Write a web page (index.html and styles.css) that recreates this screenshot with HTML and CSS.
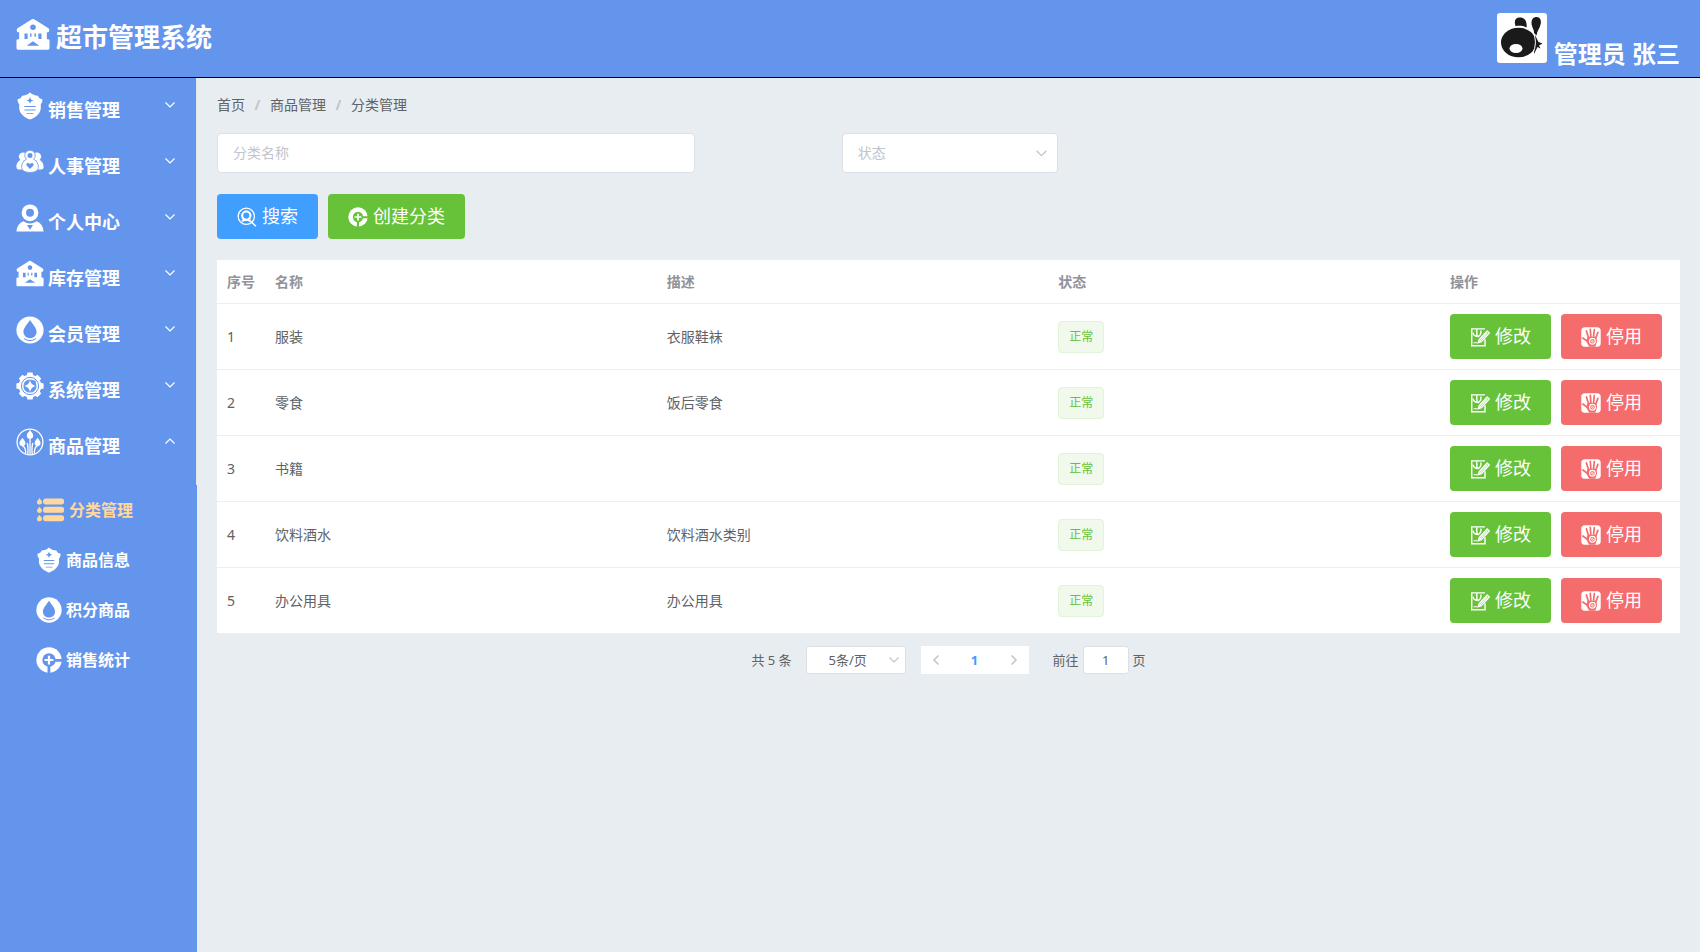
FILE: index.html
```html
<!DOCTYPE html>
<html lang="zh-CN">
<head>
<meta charset="utf-8">
<title>超市管理系统</title>
<link rel="stylesheet" href="styles.css">
</head>
<body>
<svg class="sprite" aria-hidden="true">
  <symbol id="i-house" viewBox="0 0 28 28">
    <path d="M14 .8Q14.800.8 15.600 1.400L26.400 8.200Q27.600 9 27.400 10.200 27.200 11.800 26 11.800H25.400V17.600H26.400Q27.600 17.600 27.600 18.800V25Q27.600 26.200 26.400 26.200H1.600Q.4 26.200.4 25V18.800Q.4 17.600 1.600 17.600H2.600V11.800H2Q.8 11.800.6 10.200.4 9 1.600 8.200L12.400 1.400Q13.200.8 14 .8Z"/>
    <g class="cut"><circle cx="14" cy="7.600" r="2.300"/><path d="M7 12.800h2.600v4.400H7zM18.400 12.800H21v4.400h-2.600zM11.600 12.800h1.200v2.600h-1.200zM15.200 12.800h1.200v2.600h-1.200zM14 19.200l5.200 3.600H8.800z"/></g>
  </symbol>
  <symbol id="i-shield" viewBox="0 0 28 28">
    <path d="M14 .6C16 2.600 19 3.800 22 3.800 22.600 5.800 24 7 26.400 7.200 26.400 9.600 26 11 24.800 12.200V16C24.800 21 19.600 26 14 27.600 8.400 26 3.200 21 3.200 16V12.200C2 11 1.600 9.600 1.600 7.200 4 7 5.400 5.800 6 3.800 9 3.800 12 2.600 14 .6Z"/>
    <g class="cut"><path d="M14 5l1 2.400 2.400 1-2.400 1-1 2.400-1-2.400-2.400-1 2.400-1z"/><path d="M8.400 14h11.200v1H8.400zM8.400 17.600h11.200v1H8.400zM10.400 21.200h7.200v.8h-7.200z"/></g>
  </symbol>
  <symbol id="i-people" viewBox="0 0 28 28">
    <circle cx="7" cy="8.600" r="4.200"/><circle cx="21" cy="8.600" r="4.200"/>
    <path d="M.4 19C.4 14.600 3 11.600 7 11.200L9 21.600H2.400Q.4 21.200.4 19ZM27.600 19C27.600 14.600 25 11.600 21 11.200L19 21.600h6.600q2-.4 2-2.600Z"/>
    <path class="cutline" stroke-width=".8" d="M14 2.200a5.200 5.200 0 0 0-3.600 9C7 13 5.400 16 5.600 19.400 6 23 9.400 24.400 14 24.400S22 23 22.400 19.400C22.600 16 21 13 17.600 11.200A5.200 5.200 0 0 0 14 2.200Z"/>
    <g class="cut"><circle cx="14" cy="7.400" r="2.500"/><path d="M14 21 10.800 17.800C9.400 16 11.600 13.800 14 16 16.400 13.800 18.600 16 17.200 17.800Z"/></g>
  </symbol>
  <symbol id="i-person" viewBox="0 0 28 28">
    <circle cx="14" cy="8.800" r="8.400"/><path d="M.4 27.600Q1 19.600 7.400 17.200Q14 21.800 20.600 17.200Q27 19.600 27.600 27.600Z"/>
    <g class="cut"><circle cx="14" cy="8.800" r="4"/><path d="M11 21h6L14 25.800z"/></g>
  </symbol>
  <symbol id="i-drop" viewBox="0 0 28 28">
    <circle cx="14" cy="14" r="13.600"/>
    <path class="cut" d="M14 4C17 8.600 20.600 12 20.600 16A6.600 6.200 0 0 1 7.400 16C7.400 12 11 8.600 14 4Z"/>
    <path class="cutstroke" stroke-width="1" d="M8 22.600Q14 26.600 20 22.600"/>
  </symbol>
  <symbol id="i-gear" viewBox="0 0 28 28">
    <circle cx="14" cy="14" r="11.200"/>
    <path d="M11.400.4h5.200l.8 4h-6.800zM11.400 27.600h5.200l.8-4h-6.800zM.4 11.400v5.200l4 .8v-6.800zM27.600 11.400v5.200l-4 .8v-6.800z"/>
    <path transform="rotate(45 14 14)" d="M11.400.8h5.200l.8 4h-6.800zM11.400 27.200h5.200l.8-4h-6.800zM.8 11.400v5.200l4 .8v-6.800zM27.200 11.400v5.200l-4 .8v-6.800z"/>
    <circle class="cutstroke" stroke-width="1" cx="14" cy="14" r="8.600"/><circle class="cutstroke" stroke-width="1.200" cx="14" cy="14" r="6"/>
    <path class="cut" d="M14 8.400h5.600v5.600L14 19.600 8.400 14z"/><circle class="cut" cx="14" cy="14" r="5.600"/>
    <path d="M14 8.800 15.900 12.100 19.200 14 15.900 15.900 14 19.200 12.100 15.900 8.800 14 12.100 12.100z"/>
  </symbol>
  <symbol id="i-trees" viewBox="0 0 28 28">
    <circle class="line" stroke-width="1.300" cx="14" cy="14" r="12.900"/>
    <path d="M14 2C14.800 4 17.200 5 17.200 7.400a3.200 3.200 0 0 1-6.400 0C10.800 5 13.200 4 14 2ZM6.400 9.800C7.200 11.800 9.400 12.800 9.400 15a3 3 0 0 1-6 0C3.400 12.800 5.600 11.800 6.400 9.800ZM21.600 9.800C22.400 11.800 24.600 12.800 24.600 15a3 3 0 0 1-6 0C18.600 12.800 20.800 11.800 21.600 9.800Z"/>
    <path class="line" stroke-width="1.300" d="M14 10v16M6.400 17.600Q10 19.500 9.600 25.600M21.600 17.600Q18 19.500 18.400 25.600M11.200 15Q12.400 19 11.800 26M16.800 15Q15.600 19 16.200 26"/>
  </symbol>
  <symbol id="i-list" viewBox="0 0 28 24">
    <g id="list-row"><path d="M3 0C4 2 5.600 2.800 5.600 4.200a2.600 2.300 0 0 1-5.200 0C.4 2.800 2 2 3 0Z"/><rect x="6.600" y=".4" width="21" height="6" rx="2.600"/></g>
    <use href="#list-row" y="8.400"/><use href="#list-row" y="16.800"/>
  </symbol>
  <symbol id="i-pie" viewBox="0 0 28 28">
    <circle cx="14" cy="14" r="13.600"/>
    <circle class="cut" cx="14" cy="14" r="7.200"/><path class="cut" d="M18 12.800h10v3H18zM12.400 20h3v8h-3z"/>
    <path d="M12.800 9.400h2.400v3.400h3.600v2.400h-3.600v3.600h-2.400v-3.600H9.200v-2.400h3.600z"/>
  </symbol>
  <symbol id="i-search" viewBox="0 0 28 28">
    <circle class="line" stroke-width="1.800" cx="13" cy="13" r="11.400"/><circle class="line" stroke-width="3" cx="13" cy="12" r="5.800"/>
    <path class="line" stroke-width="2.200" d="M19 20 26.600 27"/><path class="line" stroke-width="3" d="M7 19.600q6-3.600 12 0"/>
  </symbol>
  <symbol id="i-edit" viewBox="0 0 28 28">
    <path class="line" stroke-width="2" d="M21 2.600H2.400v23.600H21V17"/>
    <path class="line" stroke-width="2" d="M9.500 3v6q0 4 2.500 5M12 13q4.500-3 3-8M4 8q1 5 6 5"/>
    <path class="line" stroke-width="2" d="M24 5.500l3 3L16 20.500 11.500 22l1.500-4.500z"/><path class="line" stroke-width="1.600" d="M13.500 20 24.500 8M5 22h5"/>
  </symbol>
  <symbol id="i-hand" viewBox="0 0 28 28">
    <rect x=".4" y=".4" width="27.200" height="27.200" rx="5"/>
    <path class="cutstroke" stroke-linecap="round" stroke-width="2.400" d="M7.600 5.500l3 9.500M13 3.200l.8 10.300M18.600 3.600l-1 10M23.600 7.500l-3.200 9M2.500 15.500l7 5"/>
    <path class="cut" d="M9.500 13.500h11.500l1.600 6-2.600 8.100h-8.500L7 19.500z"/>
    <circle cx="16" cy="20" r="4.800"/><circle class="cutstroke" stroke-width="1.400" cx="16" cy="20" r="2.600"/><path class="cutstroke" stroke-width="1.400" d="M14 22l4-4"/>
  </symbol>
  <symbol id="i-down" viewBox="0 0 12 12"><path class="line" stroke-width="1.200" d="M1.500 3.500 6 8l4.500-4.500"/></symbol>
  <symbol id="i-up" viewBox="0 0 12 12"><path class="line" stroke-width="1.200" d="M1.500 8.500 6 4l4.500 4.500"/></symbol>
  <symbol id="i-left" viewBox="0 0 12 12"><path class="line" stroke-width="1.500" d="M8.500 1.500 4 6l4.500 4.500"/></symbol>
  <symbol id="i-right" viewBox="0 0 12 12"><path class="line" stroke-width="1.500" d="M3.500 1.500 8 6l-4.500 4.500"/></symbol>
</svg>

<header class="topbar">
  <div class="brand"><svg class="brand-icon"><use href="#i-house"/></svg><h1 class="brand-name">超市管理系统</h1></div>
  <div class="user">
    <svg class="avatar" viewBox="0 0 50 50" role="img" aria-label="头像">
      <rect width="50" height="50" rx="3" fill="#fff"/>
      <g fill="#1a1a1a"><ellipse cx="21.500" cy="29.500" rx="17.500" ry="14.800"/><path d="M18 11C17 6 20 4 24 4.600 29 5.500 30 10 29.600 14.500 26 12.600 22 12.400 18.600 13.200Z"/><path d="M34.500 10C34.500 6 36.500 4 39.600 4 43 4 44.400 7 43.800 10.500 43 15 40 18 39.500 22.500L37 20C37.500 17 34.500 14 34.500 10Z"/><path d="M38 22 41.500 29 45.500 30.500 42 32.500 43.500 35.500 40.500 34 37 41Z"/></g>
      <path d="M35 17q7 12 0 25" fill="none" stroke="#fff" stroke-width="1"/>
      <ellipse cx="19" cy="35.500" rx="6.500" ry="4.500" fill="#fff"/>
    </svg>
    <span class="user-name">管理员 张三</span>
  </div>
</header>

<div class="layout">
  <nav class="sidebar" aria-label="主菜单">
    <div class="menu">
      <button class="menu-item" type="button" aria-expanded="false"><svg class="menu-icon"><use href="#i-shield"/></svg><span class="menu-text">销售管理</span><svg class="arrow"><use href="#i-down"/></svg></button>
      <button class="menu-item" type="button" aria-expanded="false"><svg class="menu-icon"><use href="#i-people"/></svg><span class="menu-text">人事管理</span><svg class="arrow"><use href="#i-down"/></svg></button>
      <button class="menu-item" type="button" aria-expanded="false"><svg class="menu-icon"><use href="#i-person"/></svg><span class="menu-text">个人中心</span><svg class="arrow"><use href="#i-down"/></svg></button>
      <button class="menu-item" type="button" aria-expanded="false"><svg class="menu-icon"><use href="#i-house"/></svg><span class="menu-text">库存管理</span><svg class="arrow"><use href="#i-down"/></svg></button>
      <button class="menu-item" type="button" aria-expanded="false"><svg class="menu-icon"><use href="#i-drop"/></svg><span class="menu-text">会员管理</span><svg class="arrow"><use href="#i-down"/></svg></button>
      <button class="menu-item" type="button" aria-expanded="false"><svg class="menu-icon"><use href="#i-gear"/></svg><span class="menu-text">系统管理</span><svg class="arrow"><use href="#i-down"/></svg></button>
      <button class="menu-item" type="button" aria-expanded="true"><svg class="menu-icon"><use href="#i-trees"/></svg><span class="menu-text">商品管理</span><svg class="arrow"><use href="#i-up"/></svg></button>
    </div>
    <div class="submenu">
      <a class="sub-item active" href="#" aria-current="page"><svg class="list-icon"><use href="#i-list"/></svg>分类管理</a>
      <a class="sub-item" href="#"><svg class="sub-icon"><use href="#i-shield"/></svg>商品信息</a>
      <a class="sub-item" href="#"><svg class="sub-icon"><use href="#i-drop"/></svg>积分商品</a>
      <a class="sub-item" href="#"><svg class="sub-icon"><use href="#i-pie"/></svg>销售统计</a>
    </div>
  </nav>

  <main class="content">
    <nav class="breadcrumb" aria-label="面包屑"><a href="#">首页</a><span class="slash">/</span><a href="#">商品管理</a><span class="slash">/</span><span>分类管理</span></nav>

    <form class="search">
      <div class="fields">
        <input class="field" type="text" placeholder="分类名称" aria-label="分类名称">
        <div class="select-box"><select class="field state" aria-label="状态"><option>状态</option><option>正常</option><option>停用</option></select><svg class="caret"><use href="#i-down"/></svg></div>
      </div>
      <div class="actions">
        <button class="btn primary" type="button"><svg class="btn-icon"><use href="#i-search"/></svg>搜索</button>
        <button class="btn success" type="button"><svg class="btn-icon"><use href="#i-pie"/></svg>创建分类</button>
      </div>
    </form>

    <table class="table">
      <colgroup><col class="col-index"><col><col><col><col class="col-ops"></colgroup>
      <thead><tr><th>序号</th><th>名称</th><th>描述</th><th>状态</th><th>操作</th></tr></thead>
      <tbody>
        <tr><td>1</td><td>服装</td><td>衣服鞋袜</td><td><span class="tag">正常</span></td><td><div class="ops"><button class="btn success" type="button"><svg class="btn-icon"><use href="#i-edit"/></svg>修改</button><button class="btn danger" type="button"><svg class="btn-icon"><use href="#i-hand"/></svg>停用</button></div></td></tr>
        <tr><td>2</td><td>零食</td><td>饭后零食</td><td><span class="tag">正常</span></td><td><div class="ops"><button class="btn success" type="button"><svg class="btn-icon"><use href="#i-edit"/></svg>修改</button><button class="btn danger" type="button"><svg class="btn-icon"><use href="#i-hand"/></svg>停用</button></div></td></tr>
        <tr><td>3</td><td>书籍</td><td></td><td><span class="tag">正常</span></td><td><div class="ops"><button class="btn success" type="button"><svg class="btn-icon"><use href="#i-edit"/></svg>修改</button><button class="btn danger" type="button"><svg class="btn-icon"><use href="#i-hand"/></svg>停用</button></div></td></tr>
        <tr><td>4</td><td>饮料酒水</td><td>饮料酒水类别</td><td><span class="tag">正常</span></td><td><div class="ops"><button class="btn success" type="button"><svg class="btn-icon"><use href="#i-edit"/></svg>修改</button><button class="btn danger" type="button"><svg class="btn-icon"><use href="#i-hand"/></svg>停用</button></div></td></tr>
        <tr><td>5</td><td>办公用具</td><td>办公用具</td><td><span class="tag">正常</span></td><td><div class="ops"><button class="btn success" type="button"><svg class="btn-icon"><use href="#i-edit"/></svg>修改</button><button class="btn danger" type="button"><svg class="btn-icon"><use href="#i-hand"/></svg>停用</button></div></td></tr>
      </tbody>
    </table>

    <div class="pagination">
      <span>共 5 条</span>
      <div class="select-box size-box"><select class="field size" aria-label="每页条数"><option>5条/页</option><option>10条/页</option></select><svg class="caret small"><use href="#i-down"/></svg></div>
      <div class="pager">
        <button class="page" type="button" disabled aria-label="上一页"><svg class="page-arrow"><use href="#i-left"/></svg></button>
        <button class="page current" type="button">1</button>
        <button class="page" type="button" disabled aria-label="下一页"><svg class="page-arrow"><use href="#i-right"/></svg></button>
      </div>
      <label class="jump">前往<input class="field jump-input" type="text" value="1">页</label>
    </div>
  </main>
</div>
</body>
</html>
```
FILE: styles.css
```css
* { box-sizing: border-box; }

body {
  margin: 0;
  min-height: 100vh;
  display: flex;
  flex-direction: column;
  background: #e8edf1;
  color: #606266;
  font: 14px/23px "Noto Sans", "Noto Sans CJK SC", sans-serif;
}

button, input, select { font: inherit; color: inherit; }
button { cursor: pointer; border: 0; }
a { color: inherit; text-decoration: none; }

svg { fill: currentColor; flex: none; }
.sprite { position: absolute; width: 0; height: 0; }
.cut { fill: var(--cut); }
.cutline { stroke: var(--cut); }
.cutstroke { fill: none; stroke: var(--cut); }
.line { fill: none; stroke: currentColor; }

/* Top bar */
.topbar {
  --cut: #6495ed;
  display: flex;
  justify-content: space-between;
  align-items: flex-start;
  height: 78px;
  padding: 0 20px 0 16px;
  border-bottom: 1px solid #000;
  background: #6495ed;
  color: #fff;
}
.brand { display: flex; align-items: flex-start; gap: 6px; padding-top: 18px; }
.brand-icon { width: 34px; height: 34px; }
.brand-name { margin: 0; font-size: 26px; line-height: 38px; }
.user { display: flex; align-items: flex-end; gap: 7px; padding-top: 13px; }
.avatar { width: 50px; height: 50px; }
.user-name { font-size: 24px; font-weight: 700; line-height: 30px; margin-bottom: -6px; }

.layout { flex: 1; display: flex; }

/* Sidebar */
.sidebar {
  --cut: #6495ed;
  flex: 0 0 197px;
  background: #6495ed;
  color: #fff;
}
.menu { padding-bottom: 15px; border-right: 1px solid #e6e6e6; }
.menu-item {
  display: flex;
  align-items: flex-start;
  width: 100%;
  height: 56px;
  padding: 14px 20px 0 16px;
  background: none;
  text-align: left;
}
.menu-icon { width: 28px; height: 28px; }
.menu-text { flex: 1; padding: 6px 0 0 4px; font-size: 18px; font-weight: 700; line-height: 25px; }
.arrow { width: 12px; height: 12px; margin-top: 7px; }
.sub-item {
  display: flex;
  align-items: center;
  gap: 4px;
  height: 50px;
  padding-left: 36px;
  font-size: 16px;
  font-weight: 700;
}
.sub-icon { width: 26px; height: 26px; }
.list-icon { width: 29px; height: 24px; }
.active { color: #ffd79f; }

/* Content */
.content { flex: 1; min-width: 0; padding: 15px 20px; }
.breadcrumb { display: flex; }
.slash { width: 25px; text-align: center; color: #c0c4cc; font-weight: 700; }

.fields { display: grid; grid-template-columns: 479fr 217fr 476fr; column-gap: 10%; margin-top: 17px; }
.field {
  width: 100%;
  height: 40px;
  padding: 0 15px 2px;
  border: 1px solid #dcdfe6;
  border-radius: 4px;
  background: #fff;
  appearance: none;
}
.field::placeholder { color: #c0c4cc; }
.state { color: #c0c4cc; }
.select-box { position: relative; color: #c0c4cc; }
.caret { position: absolute; right: 10px; top: 14px; width: 13px; height: 13px; pointer-events: none; }
.small { right: 6px; top: 8px; width: 12px; height: 12px; }

.actions, .ops { display: flex; gap: 10px; }
.actions { margin: 21px 0; }
.btn {
  display: flex;
  align-items: center;
  gap: 5px;
  height: 45px;
  padding: 0 20px;
  border-radius: 4px;
  color: #fff;
  font-size: 18px;
  white-space: nowrap;
}
.btn-icon { width: 20px; height: 20px; }
.primary { background: #409eff; --cut: #409eff; }
.success { background: #67c23a; --cut: #67c23a; }
.danger { background: #f56c6c; --cut: #f56c6c; }

/* Table */
.table { width: 100%; table-layout: fixed; border-collapse: separate; border-spacing: 0; background: #fff; }
.col-index { width: 48px; }
.col-ops { width: 240px; }
th, td { padding: 10px; border-bottom: 1px solid #ebeef5; text-align: left; }
th { color: #909399; white-space: nowrap; }
.tag {
  display: block;
  width: fit-content;
  padding: 0 10px;
  border: 1px solid #e1f3d8;
  border-radius: 4px;
  background: #f0f9eb;
  color: #67c23a;
  font-size: 12px;
  line-height: 30px;
}

/* Pagination */
.pagination { display: flex; justify-content: center; align-items: center; margin-top: 12px; font-size: 13px; }
.size-box { width: 100px; margin: 0 15px 0 14px; }
.size-box .field, .jump-input { height: 28px; border-radius: 3px; }
.size-box .size { padding: 0 22px; color: #606266; }
.pager { display: flex; background: #fff; }
.page { display: flex; align-items: center; justify-content: center; width: 30px; height: 28px; padding: 0; background: none; color: #c0c4cc; }
.page-arrow { width: 12px; height: 12px; }
.current { width: 48px; color: #409eff; font-weight: 700; }
.jump { display: flex; align-items: center; gap: 4px; margin-left: 24px; }
.jump .jump-input { width: 46px; padding: 0 3px; text-align: center; }
```
